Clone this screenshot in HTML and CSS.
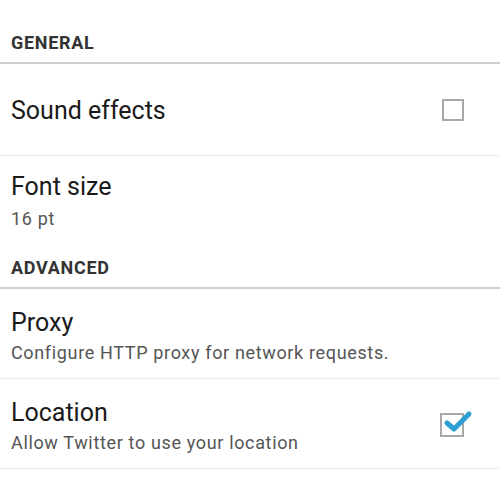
FILE: index.html
```html
<!DOCTYPE html>
<html>
<head>
<meta charset="utf-8">
<link rel="stylesheet" href="styles.css">
</head>
<body>
<div class="prefs">
  <div class="category cat-general">GENERAL</div>
  <div class="row row-single">
    <div class="text"><div class="title">Sound effects</div></div>
    <span class="check"></span>
  </div>
  <div class="row row-font last">
    <div class="text"><div class="title">Font size</div><div class="summary">16 pt</div></div>
  </div>
  <div class="category cat-adv">ADVANCED</div>
  <div class="row row-double">
    <div class="text"><div class="title">Proxy</div><div class="summary">Configure HTTP proxy for network requests.</div></div>
  </div>
  <div class="row row-double">
    <div class="text"><div class="title">Location</div><div class="summary">Allow Twitter to use your location</div></div>
    <span class="check checked">
      <svg viewBox="0 0 30 26" width="30" height="26"><path d="M4 14 L11 20 L26 5" fill="none" stroke="#2e9fd2" stroke-width="5" stroke-linecap="round" stroke-linejoin="round"/></svg>
    </span>
  </div>
</div>
</body>
</html>
```
FILE: styles.css
```css
html, body { margin: 0; padding: 0; background: #fff; }
body { font-family: Roboto, "Noto Sans", sans-serif; width: 500px; height: 500px; overflow: hidden; }
.prefs { display: flex; flex-direction: column; }
.category {
  box-sizing: border-box;
  height: 64px;
  padding: 0 0 9px 11px;
  font-weight: 700;
  font-size: 18px;
  letter-spacing: 0.7px;
  color: #333;
  border-bottom: 2px solid #cfcfcf;
  display: flex;
  align-items: flex-end;
  line-height: 20px;
}
.row {
  box-sizing: border-box;
  display: flex;
  align-items: center;
  padding: 0 11px;
  border-bottom: 1px solid #ececec;
}
.row.last { border-bottom: none; }
.row-single { height: 92px; padding-top: 3px; }
.row-font { height: 69px; align-items: flex-start; padding-top: 16px; }
.row-double { height: 90px; padding-top: 4px; }
.text { flex: 1; }
.title { font-size: 25px; color: #1a1a1a; line-height: 30px; }
.summary { font-size: 18px; letter-spacing: 0.65px; color: #555; line-height: 20px; margin-top: 5px; }
.row-font .summary { margin-top: 7px; }
.check {
  width: 22px; height: 22px;
  box-sizing: border-box;
  border: 2px solid #a8a8a8;
  margin-right: 25px;
  position: relative;
}
.row-single .check { margin-top: -3px; }
.check.checked { width: 24px; height: 24px; margin-top: -2px; }
.check.checked svg { position: absolute; left: 1px; top: -6px; }
```
